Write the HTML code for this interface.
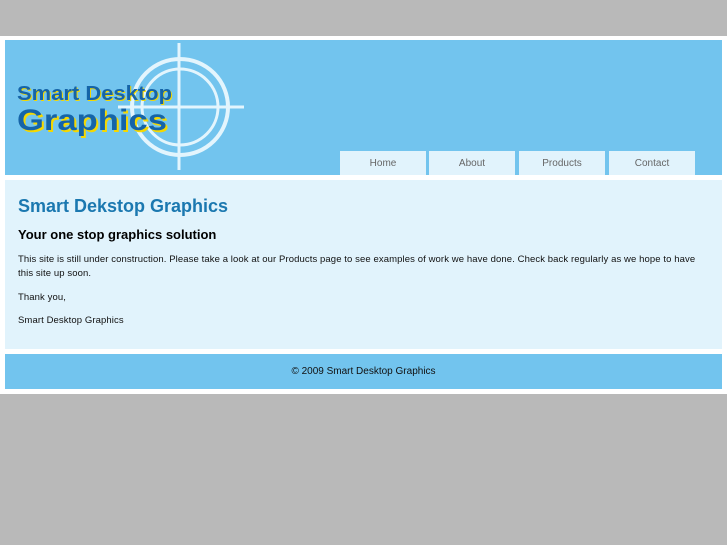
<!DOCTYPE html>
<html><head><style>
body{margin:0;width:727px;height:545px;background:#b9b9b9;font-family:"Liberation Sans",sans-serif;position:relative;overflow:hidden}
.wrap{position:absolute;left:0;top:36px;width:727px;height:358px;background:#fff}
.hdr{position:absolute;left:5px;top:4px;width:717px;height:135px;background:#72c4ee}
.tab{position:absolute;top:111px;height:24px;width:86px;background:#e1f3fc;color:#666;font-size:10px;text-align:center;line-height:25px}
.content{position:absolute;left:5px;top:144px;width:717px;height:169px;background:#e1f3fc}
.foot{position:absolute;left:5px;top:318px;width:717px;height:35px;background:#72c4ee;font-size:10px;text-align:center;line-height:36px;color:#111}
h1{position:absolute;left:13px;top:16px;margin:0;font-size:18px;color:#1b78b0}
h2{position:absolute;left:13px;top:47px;margin:0;font-size:13px;color:#000}
p{position:absolute;left:13px;margin:0;font-size:9.5px;line-height:14px;color:#111;width:704px;white-space:nowrap;letter-spacing:0.1px}
</style></head><body>
<div class="wrap">
<div class="hdr">
<svg width="260" height="135" style="position:absolute;left:0;top:0">
<g stroke="#e3f5fd" fill="none">
<circle cx="175" cy="67" r="48" stroke-width="4"/>
<circle cx="175" cy="67" r="38" stroke-width="3"/>
<line x1="174" y1="3" x2="174" y2="130" stroke-width="3"/>
<line x1="113" y1="67" x2="239" y2="67" stroke-width="3"/>
</g>
<g font-family="Liberation Sans,sans-serif" font-weight="bold">
<text x="13" y="61" font-size="20" fill="#f5d800" textLength="155" lengthAdjust="spacingAndGlyphs">Smart Desktop</text>
<text x="12" y="60" font-size="20" fill="#1564a8" textLength="155" lengthAdjust="spacingAndGlyphs">Smart Desktop</text>
<text x="14" y="92" font-size="30" fill="#f5d800" textLength="150" lengthAdjust="spacingAndGlyphs">Graphics</text>
<text x="12" y="90" font-size="30" fill="#1564a8" textLength="150" lengthAdjust="spacingAndGlyphs">Graphics</text>
</g>
</svg>
<div class="tab" style="left:335px">Home</div>
<div class="tab" style="left:424px">About</div>
<div class="tab" style="left:514px">Products</div>
<div class="tab" style="left:604px">Contact</div>
</div>
<div class="content">
<h1>Smart Dekstop Graphics</h1>
<h2>Your one stop graphics solution</h2>
<p style="top:73px">This site is still under construction. Please take a look at our Products page to see examples of work we have done. Check back regularly as we hope to have<br>this site up soon.</p>
<p style="top:111px">Thank you,</p>
<p style="top:134px">Smart Desktop Graphics</p>
</div>
<div class="foot">© 2009 Smart Desktop Graphics</div>
</div>
</body></html>
